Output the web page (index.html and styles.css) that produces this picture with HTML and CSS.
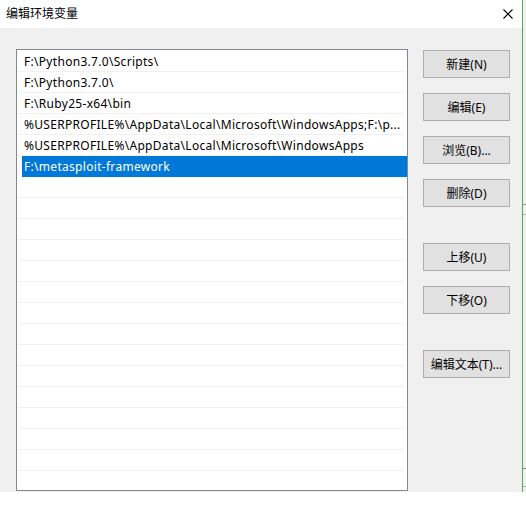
FILE: index.html
```html
<!DOCTYPE html>
<html lang="zh-CN">
<head>
    <meta charset="UTF-8">
    <title>编辑环境变量</title>
    <link rel="stylesheet" href="styles.css">
</head>
<body>
<div class="screen">
    <div class="dialog">
        <div class="titlebar">
            <span class="title">编辑环境变量</span>
            <span class="close">
                <svg width="10" height="10" viewBox="0 0 10 10">
                    <path d="M0.5 0.5L9.5 9.5M9.5 0.5L0.5 9.5" stroke="#000" stroke-width="1.1" fill="none"/>
                </svg>
            </span>
        </div>
        <div class="content">
            <ul class="pathlist">
                <li>F:\Python3.7.0\Scripts\</li>
                <li>F:\Python3.7.0\</li>
                <li>F:\Ruby25-x64\bin</li>
                <li>%USERPROFILE%\AppData\Local\Microsoft\WindowsApps;F:\p...</li>
                <li>%USERPROFILE%\AppData\Local\Microsoft\WindowsApps</li>
                <li class="current">F:\metasploit-framework</li>
                <li></li>
                <li></li>
                <li></li>
                <li></li>
                <li></li>
                <li></li>
                <li></li>
                <li></li>
                <li></li>
                <li></li>
                <li></li>
                <li></li>
                <li></li>
                <li></li>
                <li></li>
            </ul>
            <div class="actions">
                <button>新建(N)</button>
                <button>编辑(E)</button>
                <button>浏览(B)...</button>
                <button>删除(D)</button>
                <button class="gap">上移(U)</button>
                <button>下移(O)</button>
                <button class="gap">编辑文本(T)...</button>
            </div>
        </div>
    </div>
    <div class="behind"></div>
</div>
</body>
</html>
```

FILE: styles.css
```css
* {
    margin: 0;
    padding: 0;
    box-sizing: border-box;
}

ul, li {
    list-style: none;
}

body {
    background-color: #fff;
    font-family: "Noto Sans", "Noto Sans CJK SC", sans-serif;
    font-size: 12px;
    color: #000;
}

.screen {
    display: flex;
    align-items: flex-start;
}

.dialog {
    width: 522px;
}

.titlebar {
    height: 28px;
    background-color: #fff;
    display: flex;
    align-items: center;
    justify-content: space-between;
    padding-left: 6px;
}

.titlebar .title {
    font-family: "Noto Sans CJK SC", sans-serif;
    font-size: 12px;
    line-height: 14px;
    margin-top: -2px;
}

.titlebar .close {
    display: flex;
    width: 10px;
    height: 10px;
    margin-right: 9px;
    margin-top: -1px;
}

.content {
    height: 464px;
    background-color: #f0f0f0;
    display: flex;
    align-items: flex-start;
    padding: 21px 0 0 16px;
}

.pathlist {
    width: 392px;
    height: 442px;
    border: 1px solid #828790;
    background-color: #fff;
    padding-top: 1px;
    overflow: hidden;
}

.pathlist li {
    height: 21px;
    line-height: 20px;
    padding: 1px 0 0 7px;
    letter-spacing: 0.3px;
    white-space: nowrap;
    overflow: hidden;
    background: linear-gradient(#f0f0f0, #f0f0f0) no-repeat 1px 100% / 386px 1px;
}

.pathlist li.current {
    color: #fff;
    background: linear-gradient(#0078d7, #0078d7) no-repeat 5px 0 / 385px 21px;
}

.actions {
    display: flex;
    flex-direction: column;
    margin-left: 15px;
    padding-top: 1px;
}

.actions button {
    width: 87px;
    height: 28px;
    margin-bottom: 15px;
    border: 1px solid #adadad;
    background-color: #e1e1e1;
    font-family: "Noto Sans", "Noto Sans CJK SC", sans-serif;
    font-size: 12px;
    color: #000;
}

.actions button.gap {
    margin-top: 21px;
}

.behind {
    width: 4px;
    height: 492px;
    border-left: 1px solid #4caf50;
    background: linear-gradient(#f0f0f0 0, #f0f0f0 204px, #999 204px, #999 205px, #f0f0f0 205px, #f0f0f0 214px, #bbb 214px, #bbb 215px, #f0f0f0 215px, #f0f0f0 468px, #888 468px, #888 469px, #f0f0f0 469px, #f0f0f0 486px, #aaa 486px, #aaa 487px, #f0f0f0 487px);
}
```
